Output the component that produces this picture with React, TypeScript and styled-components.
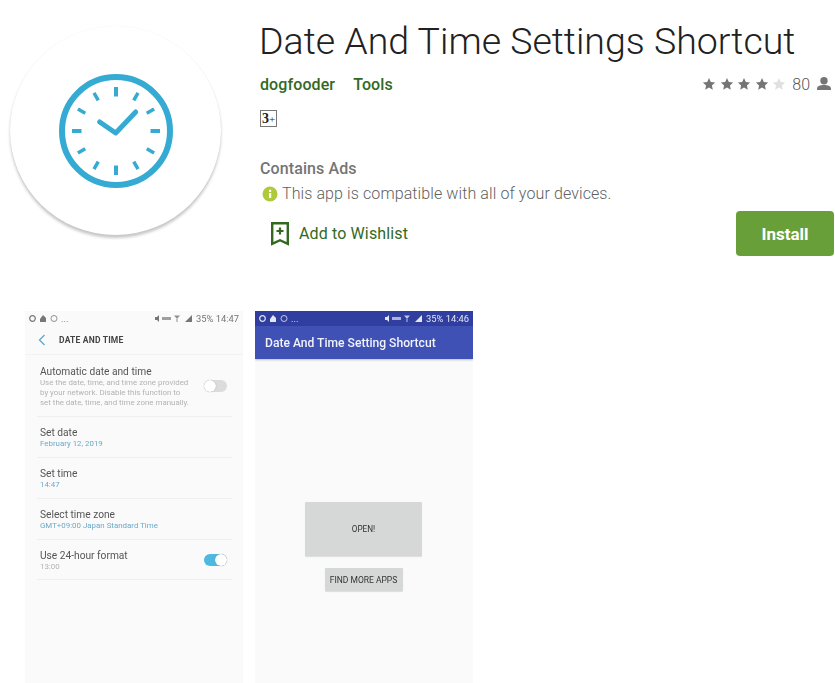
import { createGlobalStyle } from "styled-components";
import styled from "styled-components";

const GlobalStyle = createGlobalStyle`
  html, body {
    margin: 0;
    padding: 0;
    background: #fff;
    font-family: Roboto, "Liberation Sans", sans-serif;
    overflow: hidden;
  }
`;

const Page = styled.div`
  width: 835px;
  height: 683px;
  overflow: hidden;
`;

const Hero = styled.section`
  display: flex;
  height: 311px;
  box-sizing: border-box;
`;

const IconColumn = styled.div`
  width: 260px;
  flex: none;
  padding: 26px 0 0 10px;
  box-sizing: border-box;
`;

const AppIcon = styled.div`
  width: 211px;
  height: 209px;
  border-radius: 50%;
  background: #fff;
  display: flex;
  align-items: center;
  justify-content: center;
  box-shadow: 0 0 1px rgba(0, 0, 0, 0.08), 0 3px 3px rgba(0, 0, 0, 0.22);
`;

const Info = styled.div`
  flex: 1;
  display: flex;
  flex-direction: column;
`;

const Title = styled.h1`
  margin: 18px 0 0 -1px;
  font-size: 37.5px;
  line-height: 47px;
  font-weight: 300;
  color: #212121;
  white-space: nowrap;
`;

const MetaRow = styled.div`
  display: flex;
  align-items: center;
  height: 24px;
  margin-top: 7px;
  padding-right: 3px;
`;

const Publisher = styled.a`
  font-size: 16px;
  font-weight: 500;
  letter-spacing: 0.1px;
  color: #33691e;
  margin-right: 18px;
`;

const Rating = styled.div`
  margin-left: auto;
  display: flex;
  align-items: center;
  font-size: 16px;
  font-weight: 300;
  color: #555;
`;

const Stars = styled.div`
  display: flex;
  gap: 3.5px;
  margin-right: 6px;
`;

const RatingCount = styled.span`
  margin-right: 6px;
`;

const AgeBadge = styled.div`
  width: 17px;
  height: 17px;
  margin-top: 14px;
  border: 1px solid #777;
  box-sizing: border-box;
  display: flex;
  align-items: center;
  justify-content: center;
  font-family: "Liberation Serif", serif;
  font-weight: 700;
  font-size: 14px;
  color: #222;
`;

const AgePlus = styled.span`
  font-size: 11px;
  font-weight: 400;
`;

const AdsLabel = styled.div`
  margin-top: 32px;
  font-size: 16px;
  line-height: 20px;
  font-weight: 500;
  letter-spacing: 0.1px;
  color: #757575;
`;

const CompatRow = styled.div`
  display: flex;
  align-items: center;
  gap: 4px;
  margin-top: 5px;
  padding-left: 2px;
  font-size: 16px;
  line-height: 20px;
  font-weight: 300;
  letter-spacing: 0.1px;
  color: #616161;
`;

const ActionRow = styled.div`
  display: flex;
  align-items: center;
  justify-content: space-between;
  margin-top: 7px;
  padding: 0 1px 0 11px;
`;

const Wishlist = styled.a`
  display: flex;
  align-items: center;
  gap: 10px;
  font-size: 16px;
  letter-spacing: 0.13px;
  color: #33691e;
`;

const InstallButton = styled.button`
  width: 98px;
  height: 45px;
  border: 0;
  border-radius: 4px;
  background: #689f38;
  color: #fff;
  font-family: inherit;
  font-size: 17px;
  font-weight: 700;
`;

const Gallery = styled.section`
  display: flex;
  gap: 12px;
  padding-left: 25px;
`;

const Phone = styled.div`
  width: 218px;
  height: 372px;
  background: #fafafa;
  flex: none;
  overflow: hidden;
`;

const StatusBar = styled.div<{ $dark?: boolean }>`
  height: 15px;
  padding: 0 4px;
  display: flex;
  align-items: center;
  justify-content: space-between;
  background: ${(p) => (p.$dark ? "#303f9f" : "transparent")};
  color: ${(p) => (p.$dark ? "#e4e6f4" : "#777")};
  font-size: 9.4px;
  filter: blur(0.4px);
`;

const StatusGroup = styled.div`
  display: flex;
  align-items: center;
  gap: 2px;
`;

const SettingsHeader = styled.div`
  display: flex;
  align-items: center;
  gap: 13px;
  height: 29px;
  padding: 0 0 1px 13px;
  border-bottom: 1px solid #f2f2f2;
  box-sizing: border-box;
  font-size: 8.5px;
  font-weight: 700;
  letter-spacing: 0.2px;
  color: #444;
  filter: blur(0.35px);
`;

const SettingsList = styled.div`
  padding: 0 11px 0 12px;
  filter: blur(0.35px);
`;

const SettingRow = styled.div<{ $height?: number }>`
  display: flex;
  align-items: flex-start;
  justify-content: space-between;
  padding: 10px 5px 0 3px;
  height: ${(p) => p.$height ?? 41}px;
  box-sizing: border-box;
  border-bottom: 1px solid #efefef;
`;

const AutoRow = styled(SettingRow)`
  padding-top: 11px;
`;

const SettingTitle = styled.div`
  font-size: 10.2px;
  line-height: 12px;
  color: #555;
`;

const SettingHint = styled.div<{ $blue?: boolean }>`
  font-size: 7.9px;
  line-height: 10px;
  color: ${(p) => (p.$blue ? "#6aa9cb" : "#b3b3b3")};
`;

const Toggle = styled.div<{ $on?: boolean }>`
  width: 23px;
  height: 12px;
  border-radius: 6px;
  flex: none;
  align-self: center;
  margin-top: -10px;
  position: relative;
  background: ${(p) => (p.$on ? "#4fb8e0" : "#dcdcdc")};

  &::after {
    content: "";
    position: absolute;
    top: 0;
    ${(p) => (p.$on ? "right: 0;" : "left: 0;")}
    width: 12px;
    height: 12px;
    border-radius: 50%;
    background: #fff;
    box-shadow: 0 0 1px rgba(0, 0, 0, 0.4);
  }
`;

const AppBar = styled.div`
  height: 33px;
  padding-left: 10px;
  display: flex;
  align-items: center;
  background: #3f51b5;
  box-shadow: 0 1px 2px rgba(0, 0, 0, 0.25);
  color: #f1f2fa;
  font-size: 12.1px;
  font-weight: 500;
  filter: blur(0.35px);
`;

const AppBody = styled.div`
  display: flex;
  flex-direction: column;
  align-items: center;
  gap: 12px;
  padding: 143px 1px 0 0;
  filter: blur(0.3px);
`;

const OpenButton = styled.div`
  width: 117px;
  height: 54px;
  display: flex;
  align-items: center;
  justify-content: center;
  background: #d6d7d7;
  border-radius: 1px;
  box-shadow: 0 1px 1px rgba(0, 0, 0, 0.12);
  font-size: 8.2px;
  color: #333;
`;

const MoreButton = styled(OpenButton)`
  width: 78px;
  height: 23px;
  font-size: 8.5px;
`;

const BackChevron = () => (
  <svg width="8" height="12" viewBox="0 0 8 12">
    <path d="M6.5 1 1.5 6l5 5" fill="none" stroke="#5fa8c9" strokeWidth="1.3" />
  </svg>
);

const Star = ({ color }: { color: string }) => (
  <svg width="14" height="14" viewBox="0 0 24 24">
    <path
      fill={color}
      d="M12 1.8l3.1 6.9 7.4.8-5.5 5 1.5 7.4L12 18.2l-6.5 3.7L7 14.5l-5.5-5 7.4-.8z"
    />
  </svg>
);

const ClockIcon = () => {
  const ticks = Array.from({ length: 12 }, (_, i) => i * 30);
  return (
    <svg width="116" height="116" viewBox="0 0 116 116">
      <circle cx="58" cy="58" r="54" fill="none" stroke="#35abd3" strokeWidth="6" />
      {ticks.map((angle) => (
        <line
          key={angle}
          x1="58"
          y1="14"
          x2="58"
          y2={angle % 90 === 0 ? "23.500" : "22.500"}
          stroke="#35abd3"
          strokeWidth={angle % 90 === 0 ? 4 : 3.5}
          transform={`rotate(${angle} 58 58)`}
        />
      ))}
      <path
        d="M41.700 49 57.700 60 77.700 39"
        fill="none"
        stroke="#35abd3"
        strokeWidth="5"
        strokeLinecap="round"
        strokeLinejoin="round"
      />
    </svg>
  );
};

const InfoIcon = () => (
  <svg width="16" height="16" viewBox="0 0 16 16">
    <circle cx="8" cy="8" r="7.500" fill="#aec93a" />
    <rect x="7" y="7" width="2.200" height="5" fill="#fff" />
    <rect x="7" y="3.800" width="2.200" height="2.200" fill="#fff" />
  </svg>
);

const BookmarkIcon = () => (
  <svg width="18" height="24" viewBox="0 0 18 24">
    <path d="M1.200 1.200h15.600v20.600l-7.800-3.600-7.800 3.600z" fill="none" stroke="#33691e" strokeWidth="2.400" />
    <path d="M9 5.500v7M5.500 9h7" stroke="#33691e" strokeWidth="2.200" />
  </svg>
);

const PersonIcon = () => (
  <svg width="16" height="16" viewBox="0 0 16 16">
    <circle cx="8" cy="4.700" r="3.700" fill="#757575" />
    <path d="M1 14v-1.500C1 10 4.500 9 8 9s7 1 7 3.500V14z" fill="#757575" />
  </svg>
);

const NotificationIcons = ({ color }: { color: string }) => (
  <svg width="30" height="9" viewBox="0 0 30 9">
    <circle cx="3.500" cy="4.500" r="2.800" fill="none" stroke={color} strokeWidth="1.200" />
    <path d="M11 8V5l3-4 3 3v4z" fill={color} />
    <circle cx="25" cy="4.500" r="3" fill="none" stroke={color} strokeWidth="0.800" />
  </svg>
);

const SystemIcons = ({ color }: { color: string }) => (
  <svg width="40" height="9" viewBox="0 0 40 9">
    <path d="M1 3h2l2-2v7L3 6H1z" fill={color} />
    <rect x="8" y="3" width="9" height="3" fill={color} opacity="0.7" />
    <path d="M20 1.500h6l-3 3.500zM22.500 5h1v3h-1z" fill={color} opacity="0.8" />
    <path d="M31 8l7-7v7z" fill={color} />
  </svg>
);

const settings = [
  { title: "Set date", hint: "February 12, 2019" },
  { title: "Set time", hint: "14:47" },
  { title: "Select time zone", hint: "GMT+09:00 Japan Standard Time" },
];

export default function App() {
  return (
    <Page>
      <GlobalStyle />
      <Hero>
        <IconColumn>
          <AppIcon>
            <ClockIcon />
          </AppIcon>
        </IconColumn>
        <Info>
          <Title>Date And Time Settings Shortcut</Title>
          <MetaRow>
            <Publisher>dogfooder</Publisher>
            <Publisher>Tools</Publisher>
            <Rating>
              <Stars>
                <Star color="#757575" />
                <Star color="#757575" />
                <Star color="#757575" />
                <Star color="#757575" />
                <Star color="#e0e0e0" />
              </Stars>
              <RatingCount>80</RatingCount>
              <PersonIcon />
            </Rating>
          </MetaRow>
          <AgeBadge>
            3<AgePlus>+</AgePlus>
          </AgeBadge>
          <AdsLabel>Contains Ads</AdsLabel>
          <CompatRow>
            <InfoIcon />
            This app is compatible with all of your devices.
          </CompatRow>
          <ActionRow>
            <Wishlist>
              <BookmarkIcon />
              Add to Wishlist
            </Wishlist>
            <InstallButton>Install</InstallButton>
          </ActionRow>
        </Info>
      </Hero>
      <Gallery>
        <Phone>
          <StatusBar>
            <StatusGroup>
              <NotificationIcons color="#777" />
              ...
            </StatusGroup>
            <StatusGroup>
              <SystemIcons color="#777" />
              35% 14:47
            </StatusGroup>
          </StatusBar>
          <SettingsHeader>
            <BackChevron />
            DATE AND TIME
          </SettingsHeader>
          <SettingsList>
            <AutoRow $height={62}>
              <div>
                <SettingTitle>Automatic date and time</SettingTitle>
                <SettingHint>
                  Use the date, time, and time zone provided
                  <br />
                  by your network. Disable this function to
                  <br />
                  set the date, time, and time zone manually.
                </SettingHint>
              </div>
              <Toggle />
            </AutoRow>
            {settings.map((s) => (
              <SettingRow key={s.title}>
                <div>
                  <SettingTitle>{s.title}</SettingTitle>
                  <SettingHint $blue>{s.hint}</SettingHint>
                </div>
              </SettingRow>
            ))}
            <SettingRow $height={40}>
              <div>
                <SettingTitle>Use 24-hour format</SettingTitle>
                <SettingHint>13:00</SettingHint>
              </div>
              <Toggle $on />
            </SettingRow>
          </SettingsList>
        </Phone>
        <Phone>
          <StatusBar $dark>
            <StatusGroup>
              <NotificationIcons color="#e4e6f4" />
              ...
            </StatusGroup>
            <StatusGroup>
              <SystemIcons color="#e4e6f4" />
              35% 14:46
            </StatusGroup>
          </StatusBar>
          <AppBar>Date And Time Setting Shortcut</AppBar>
          <AppBody>
            <OpenButton>OPEN!</OpenButton>
            <MoreButton>FIND MORE APPS</MoreButton>
          </AppBody>
        </Phone>
      </Gallery>
    </Page>
  );
}
